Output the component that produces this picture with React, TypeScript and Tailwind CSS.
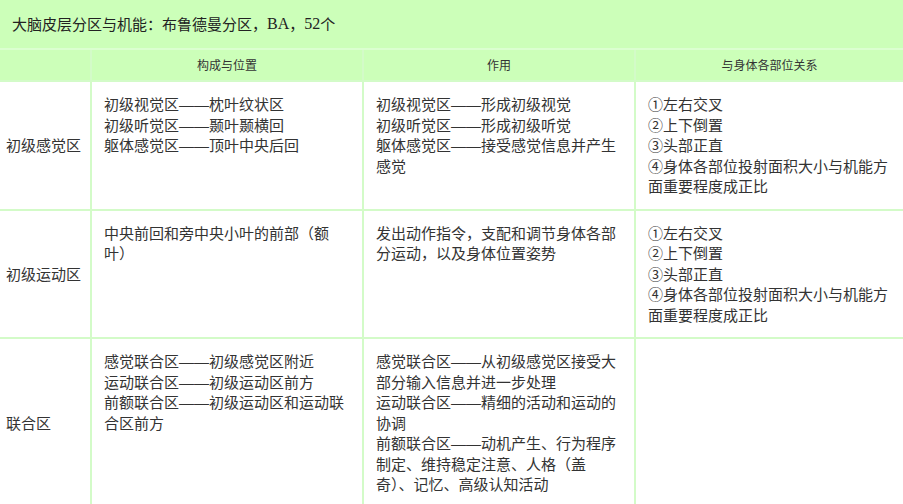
import React from "react";

const font = { fontFamily: '"Noto Sans CJK SC", "Noto Sans", sans-serif' };

const rows: { name: string; a: string[]; b: string[]; c: string[] }[] = [
  {
    name: "初级感觉区",
    a: ["初级视觉区——枕叶纹状区", "初级听觉区——颞叶颞横回", "躯体感觉区——顶叶中央后回"],
    b: ["初级视觉区——形成初级视觉", "初级听觉区——形成初级听觉", "躯体感觉区——接受感觉信息并产生感觉"],
    c: ["①左右交叉", "②上下倒置", "③头部正直", "④身体各部位投射面积大小与机能方面重要程度成正比"],
  },
  {
    name: "初级运动区",
    a: ["中央前回和旁中央小叶的前部（额叶）"],
    b: ["发出动作指令，支配和调节身体各部分运动，以及身体位置姿势"],
    c: ["①左右交叉", "②上下倒置", "③头部正直", "④身体各部位投射面积大小与机能方面重要程度成正比"],
  },
  {
    name: "联合区",
    a: ["感觉联合区——初级感觉区附近", "运动联合区——初级运动区前方", "前额联合区——初级运动区和运动联合区前方"],
    b: [
      "感觉联合区——从初级感觉区接受大部分输入信息并进一步处理",
      "运动联合区——精细的活动和运动的协调",
      "前额联合区——动机产生、行为程序制定、维持稳定注意、人格（盖奇）、记忆、高级认知活动",
    ],
    c: [],
  },
];

const dashFont = { fontFamily: '"Liberation Sans", Arial, sans-serif' };

function Line({ text }: { text: string }) {
  const parts = text.split("——");
  return (
    <div>
      {parts.map((p, i) => (
        <React.Fragment key={i}>
          {i > 0 && (
            <span style={dashFont} className="whitespace-nowrap leading-[0px]">——</span>
          )}
          {p}
        </React.Fragment>
      ))}
    </div>
  );
}

function Cell({ lines }: { lines: string[] }) {
  return (
    <div className="bg-white px-[12px] py-[12px] text-[15px] leading-[20.5px] text-[#333]">
      {lines.map((l, i) => (
        <Line key={i} text={l} />
      ))}
    </div>
  );
}

export default function App() {
  return (
    <div lang="zh-CN" className="w-[903px] h-[504px] overflow-hidden bg-white" style={font}>
      <div className="h-[48px] bg-[#ccffb9] flex items-center pl-[12px] text-[15px] text-[#222]">
        <span>大脑皮层分区与机能：布鲁德曼分区，</span>
        <span style={{ fontFamily: '"Liberation Serif", serif' }} className="text-[16px] leading-[0px]">BA</span>
        <span>，</span>
        <span style={{ fontFamily: '"Liberation Serif", serif' }} className="text-[16px] leading-[0px]">52</span>
        <span>个</span>
      </div>
      <div className="h-[2px] bg-[#dbffd0]" />
      <div className="grid grid-cols-[90px_270px_270px_1fr] gap-[2px] bg-[#d3fbc8]">
        <div className="h-[30px] bg-[#ccffb9]" />
        <div className="h-[30px] bg-[#ccffb9] flex items-center justify-center text-[12px] text-[#333]">构成与位置</div>
        <div className="h-[30px] bg-[#ccffb9] flex items-center justify-center text-[12px] text-[#333]">作用</div>
        <div className="h-[30px] bg-[#ccffb9] flex items-center justify-center text-[12px] text-[#333]">与身体各部位关系</div>
        {rows.map((r) => (
          <React.Fragment key={r.name}>
            <div className="bg-white flex items-center px-[6px] text-[15px] text-[#333]">{r.name}</div>
            <Cell lines={r.a} />
            <Cell lines={r.b} />
            <Cell lines={r.c} />
          </React.Fragment>
        ))}
      </div>
    </div>
  );
}
